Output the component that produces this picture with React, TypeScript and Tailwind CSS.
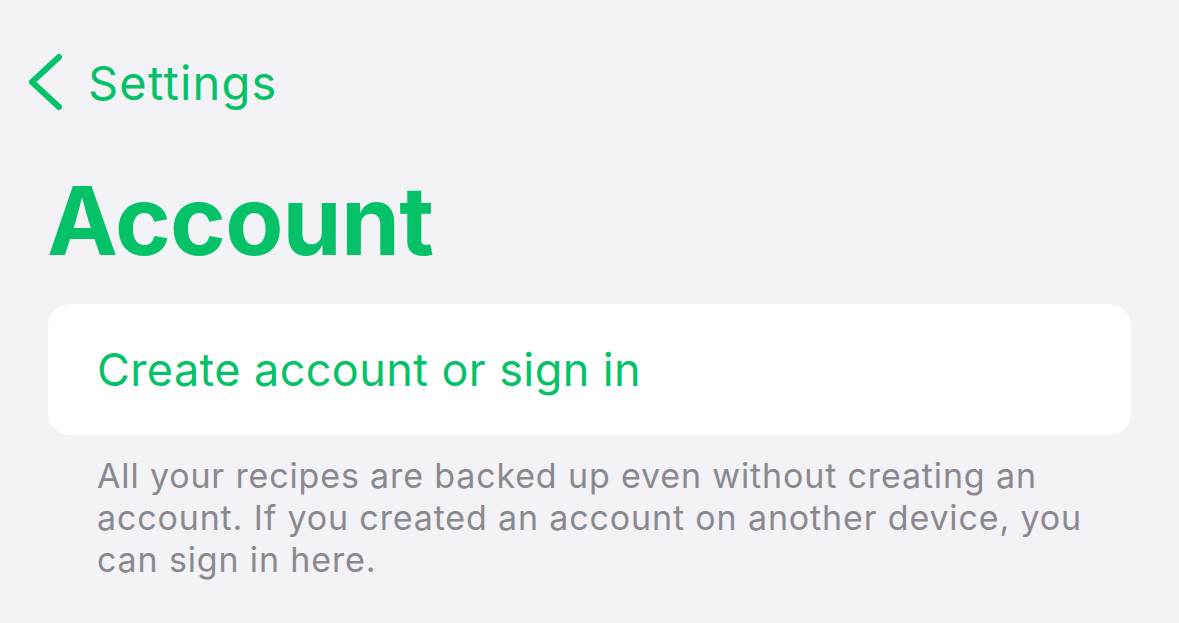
import React from "react";

export default function App() {
  return (
    <div
      className="w-[1179px] h-[623px] bg-[#f2f2f7] overflow-hidden"
      style={{ fontFamily: "Inter, 'Noto Sans', sans-serif" }}
    >
      <div className="flex items-center h-[56px] mt-[54px] pl-[26px]">
        <svg width="40" height="58" viewBox="0 0 40 58" className="shrink-0">
          <path
            d="M33 4 L6 29 L33 54"
            fill="none"
            stroke="#05c167"
            strokeWidth="6"
            strokeLinecap="round"
            strokeLinejoin="round"
          />
        </svg>
        <span className="ml-[22px] text-[47px] leading-none text-[#05c167] tracking-[1.2px]">
          Settings
        </span>
      </div>
      <h1 className="mt-[61px] ml-[47px] text-[95px] leading-[100px] font-bold text-[#05c167] tracking-[-0.8px]">
        Account
      </h1>
      <div className="mt-[33px] mx-[48px] h-[131px] bg-white rounded-[22px] flex items-center pl-[49px]">
        <span className="text-[45px] leading-none text-[#05c167] tracking-[0.4px]">Create account or sign in</span>
      </div>
      <p className="mt-[20px] ml-[97px] mr-[80px] text-[34px] leading-[42px] text-[#8a8a8e] tracking-[0.85px]">
        All your recipes are backed up even without creating an account. If you created an account on another device, you can sign in here.
      </p>
    </div>
  );
}
